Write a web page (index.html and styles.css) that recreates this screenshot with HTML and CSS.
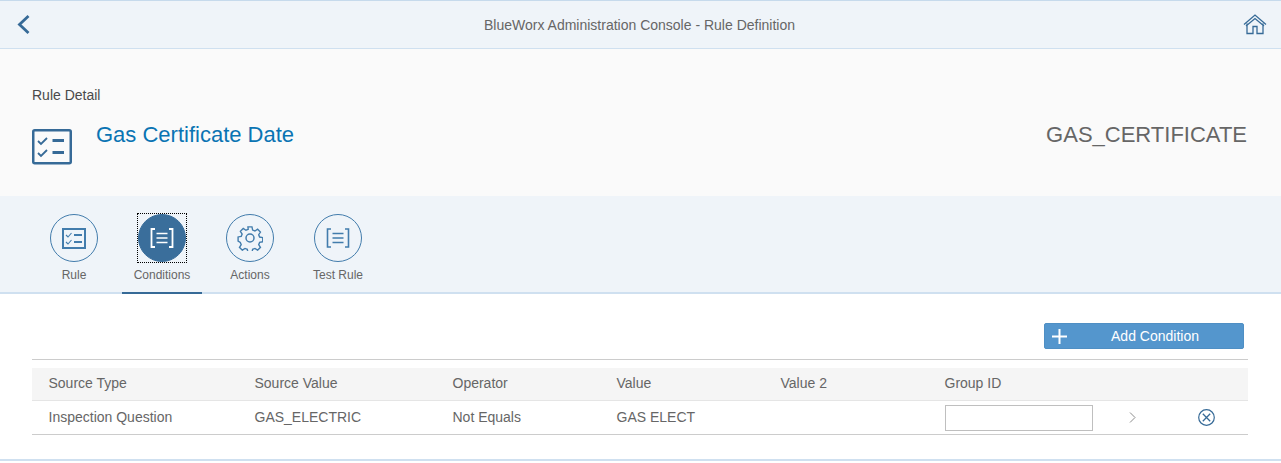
FILE: index.html
```html
<!DOCTYPE html>
<html lang="en">
<head>
<meta charset="utf-8">
<title>Rule Definition</title>
<link rel="stylesheet" href="styles.css">
</head>
<body>
<div class="page">
  <header class="shell">
    <button class="icon-btn" aria-label="Back">
      <svg width="14" height="22" viewBox="0 0 14 22"><path d="M11.500 2L2.500 10.500 11.500 19" fill="none" stroke="#366a97" stroke-width="2.800"/></svg>
    </button>
    <div class="shell-title">BlueWorx Administration Console - Rule Definition</div>
    <button class="icon-btn" aria-label="Home">
      <svg width="24" height="21" viewBox="0 0 24 21"><path d="M1 10.500L12 1l11 9.500M4 9.500V19.500h6v-7h4v7h6V9.500M3 12L12 4.500 21 12" fill="none" stroke="#366a97" stroke-width="1.300"/></svg>
    </button>
  </header>

  <section class="object-header">
    <div class="crumb">Rule Detail</div>
    <div class="object-row">
      <svg class="object-icon" width="40" height="36" viewBox="0 0 40 36"><rect x="1.250" y="1.250" width="37.500" height="33" rx="1.500" fill="none" stroke="#366a97" stroke-width="2.500"/><path d="M6 12l3 3 6-6M6 24l3 3 6-6" fill="none" stroke="#366a97" stroke-width="1.800"/><path d="M20.500 11.500h11.500M20.500 23.500h11.500" stroke="#366a97" stroke-width="2.800"/></svg>
      <h1 class="object-title">Gas Certificate Date</h1>
      <div class="object-id">GAS_CERTIFICATE</div>
    </div>
  </section>

  <nav class="tabs">
    <div class="tab">
      <div class="tab-circle">
        <svg width="24" height="21" viewBox="0 0 24 21"><rect x="1" y="1" width="22" height="19" fill="none" stroke="#427cac" stroke-width="2"/><path d="M4 7l2 2 3.500-4M4 14l2 2 3.500-4" fill="none" stroke="#427cac" stroke-width="1.100"/><path d="M12 7h8M12 14h8" stroke="#427cac" stroke-width="1.900"/></svg>
      </div>
      <div class="tab-label">Rule</div>
    </div>
    <div class="tab tab-active">
      <div class="tab-focus">
        <div class="tab-circle">
          <svg width="24" height="20" viewBox="0 0 24 20"><path d="M5 1H1.500v18H5M19 1h3.500v18H19" fill="none" stroke="#fff" stroke-width="1.800"/><path d="M6.500 5.500h11M6.500 10h11M6.500 14.500h11" stroke="#fff" stroke-width="1.700"/></svg>
        </div>
      </div>
      <div class="tab-label">Conditions</div>
    </div>
    <div class="tab">
      <div class="tab-circle">
        <svg width="26" height="26" viewBox="0 0 26 26"><path d="M10.800 1h4.400l.7 3.400 2.500 1 2.900-1.900 3.100 3.100-1.900 2.900 1 2.500 3.400.7v4.400l-3.400.7-1 2.500 1.900 2.900-3.100 3.100-2.900-1.900-2.500 1-.7 3.400h-4.400l-.7-3.400-2.500-1-2.900 1.900-3.100-3.100 1.900-2.900-1-2.500L.1 16.300v-4.400l3.400-.7 1-2.500L2.600 5.800l3.100-3.100 2.900 1.900 2.500-1z" transform="translate(1 1) scale(.92)" fill="none" stroke="#427cac" stroke-width="1.500"/><circle cx="13" cy="13" r="4" fill="none" stroke="#427cac" stroke-width="1.500"/></svg>
      </div>
      <div class="tab-label">Actions</div>
    </div>
    <div class="tab">
      <div class="tab-circle">
        <svg width="24" height="20" viewBox="0 0 24 20"><path d="M5 1H1.500v18H5M19 1h3.500v18H19" fill="none" stroke="#427cac" stroke-width="1.600"/><path d="M6.500 5.500h11M6.500 10h11M6.500 14.500h11" stroke="#427cac" stroke-width="1.500"/></svg>
      </div>
      <div class="tab-label">Test Rule</div>
    </div>
  </nav>

  <main class="content">
    <div class="toolbar">
      <button class="add-btn">
        <svg width="15" height="15" viewBox="0 0 15 15"><path d="M7.500 0v15M0 7.500h15" stroke="#fff" stroke-width="2"/></svg>
        <span class="add-label">Add Condition</span>
      </button>
    </div>
    <div class="grid">
      <div class="row row-head">
        <div class="cell">Source Type</div>
        <div class="cell">Source Value</div>
        <div class="cell">Operator</div>
        <div class="cell">Value</div>
        <div class="cell">Value 2</div>
        <div class="cell">Group ID</div>
        <div class="cell"></div>
        <div class="cell"></div>
      </div>
      <div class="row row-body">
        <div class="cell">Inspection Question</div>
        <div class="cell">GAS_ELECTRIC</div>
        <div class="cell">Not Equals</div>
        <div class="cell">GAS ELECT</div>
        <div class="cell"></div>
        <div class="cell"><input class="group-input" type="text" aria-label="Group ID"></div>
        <div class="cell cell-chevron"><svg width="7" height="11" viewBox="0 0 7 11"><path d="M1 .5L6 5.500 1 10.500" fill="none" stroke="#8c8c8c"/></svg></div>
        <div class="cell cell-delete"><svg width="17" height="17" viewBox="0 0 17 17"><circle cx="8.500" cy="8.500" r="7.800" fill="none" stroke="#366a97" stroke-width="1.200"/><path d="M4.800 4.800l7.400 7.400M12.200 4.800l-7.400 7.400" stroke="#366a97" stroke-width="1.300"/></svg></div>
      </div>
    </div>
  </main>
  <div class="page-end"></div>
</div>
</body>
</html>
```
FILE: styles.css
```css
* { box-sizing: border-box; }
html, body { margin: 0; padding: 0; background: #fff; }
body { font-family: "Liberation Sans", Arial, sans-serif; color: #666; }
.page { width: 1281px; height: 463px; overflow: hidden; display: flex; flex-direction: column; }

.shell {
  height: 49px; flex: none;
  display: flex; align-items: center; justify-content: space-between;
  padding: 0 14px 0 17px;
  background: #eff4f9;
  border-top: 1px solid #c6daec;
  border-bottom: 1px solid #cfe0f0;
  position: relative;
}
.icon-btn { background: none; border: 0; padding: 0; display: flex; }
.shell-title { font-size: 14px; color: #666; position: absolute; left: 0; right: 2px; text-align: center; top: 16px; }
.shell .icon-btn { position: relative; z-index: 1; }

.object-header { height: 147px; flex: none; background: #fafafa; padding: 39px 34px 0 32px; }
.crumb { font-size: 14px; line-height: 15px; color: #4a4a4a; }
.object-row { display: flex; align-items: flex-start; margin-top: 17px; }
.object-icon { flex: none; margin-top: 9px; }
.object-title { margin: 0 0 0 24px; padding-top: 2px; font-size: 22px; font-weight: 400; line-height: 26px; color: #0a74b3; flex: 1; }
.object-id { padding-top: 2px; font-size: 22px; line-height: 26px; color: #666; }

.tabs {
  height: 98px; flex: none;
  display: flex; padding-left: 32px;
  background: #eff4f9;
  border-bottom: 2px solid #cfe0f0;
}
.tab { width: 80px; margin-right: 8px; height: 98px; display: flex; flex-direction: column; align-items: center; padding-top: 18px; }
.tab:first-child { width: 84px; margin-right: 6px; }
.tab-circle {
  width: 48px; height: 48px; border-radius: 50%;
  border: 1px solid #427cac;
  display: flex; align-items: center; justify-content: center;
}
.tab-label { font-size: 12px; line-height: 14px; color: #666; margin-top: 6px; }
.tab-active { position: relative; }
.tab-active::after { content: ""; position: absolute; left: 0; right: 0; top: 96px; height: 2px; background: #366a97; }
.tab-focus { width: 50px; height: 50px; margin-top: -1px; margin-bottom: -1px; outline: 1px dotted #000; outline-offset: -1px; display: flex; align-items: center; justify-content: center; }
.tab-active .tab-circle { background: #3a6e9b; border-color: #3a6e9b; }

.content { height: 165px; flex: none; background: #fff; padding: 29px 33px 0 32px; }
.toolbar { display: flex; justify-content: flex-end; padding-right: 4px; }
.add-btn {
  width: 200px; height: 26px;
  display: flex; align-items: center;
  padding: 0 0 0 7px;
  background: #5496cd; border: 1px solid #4f8fc4; border-radius: 2px;
  font: inherit;
}
.add-label { flex: 1; text-align: center; padding-left: 0; color: #fff; font-size: 14px; }
.grid { margin-top: 10px; border-top: 1px solid #ccc; padding-top: 8px; }
.row { display: grid; grid-template-columns: 206px 198px 164px 164px 164px 164px 80px 76px; align-items: center; font-size: 14px; color: #666; }
.row-head { height: 33px; background: #f5f5f5; border-bottom: 1px solid #e5e5e5; }
.row-body { height: 34px; border-bottom: 1px solid #ccc; }
.cell { padding-left: 16.500px; line-height: 16px; padding-bottom: 1px; }
.row-head .cell { padding-bottom: 3px; }
.group-input { display: block; width: 148px; height: 26px; border: 1px solid #bfbfbf; background: #fff; padding: 0; margin-top: 1px; }
.cell-chevron { padding-left: 0; margin-left: 37px; display: flex; }
.cell-delete { padding-left: 0; margin-left: 26px; display: flex; }

.page-end { height: 2px; flex: none; background: #cfe0f0; }
```
